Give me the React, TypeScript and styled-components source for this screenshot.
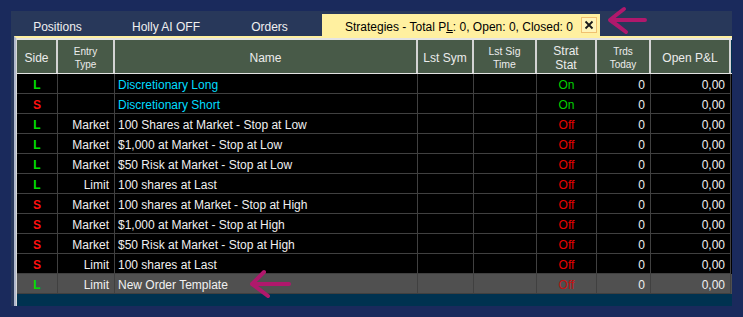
import React from "react";
import styled, { createGlobalStyle } from "styled-components";

const GlobalStyle = createGlobalStyle`
  html, body { margin: 0; padding: 0; background: #1a2a5c; }
  body { font-family: "Liberation Sans", Arial, sans-serif; }
`;

const COLS = "41px 57px 303px 56px 63px 60px 54px 80px";

const Page = styled.div`
  position: relative;
  width: 743px;
  height: 317px;
  box-sizing: border-box;
  padding: 11px 0 0 11px;
`;

const Panel = styled.div`
  width: 721px;
  height: 295px;
  background: #28385a;
  display: flex;
  flex-direction: column;
`;

const TabBar = styled.div`
  height: 25px;
  display: flex;
  align-items: flex-end;
  padding-left: 4px;
`;

const Tab = styled.div<{ $w: number }>`
  width: ${(p) => p.$w}px;
  height: 22px;
  box-sizing: border-box;
  padding-top: 4px;
  display: flex;
  align-items: center;
  justify-content: center;
  color: #f0f0f0;
  font-size: 12px;
`;

const ActiveTab = styled.div`
  margin-left: 15px;
  width: 278px;
  height: 22px;
  box-sizing: border-box;
  padding: 4px 3px 0 23px;
  background: #fff0a0;
  display: flex;
  align-items: center;
  justify-content: space-between;
  color: #000;
  font-size: 12px;
`;

const ActiveLabel = styled.span`
  white-space: nowrap;
  u { text-decoration: underline; }
`;

const CloseBox = styled.div`
  width: 16px;
  height: 16px;
  box-sizing: border-box;
  margin-top: -4px;
  border: 1px solid #f0c070;
  background: #fff4b8;
  display: flex;
  align-items: center;
  justify-content: center;
`;

const Pane = styled.div`
  flex: 1;
  margin-left: 3px;
  border-left: 2px solid #b0b8cc;
  border-top: 2px solid #fff0a0;
  display: flex;
  flex-direction: column;
  background: #003250;
`;

const Grid = styled.div`
  width: 715px;
  flex: 1;
  border-left: 1px solid #d8d8d8;
  display: flex;
  flex-direction: column;
  background: #003250;
`;

const HeaderRow = styled.div`
  display: grid;
  grid-template-columns: ${COLS};
  height: 36px;
  box-sizing: border-box;
  border-top: 2px solid #e4e4e4;
  border-bottom: 1px solid #e4e4e4;
`;

const HeaderCell = styled.div<{ $size?: number; $lh?: number }>`
  background: #485a48;
  border-right: 2px solid #d4d4d4;
  display: flex;
  align-items: center;
  justify-content: center;
  text-align: center;
  padding-top: 2px;
  color: #ececec;
  font-size: ${(p) => p.$size ?? 12}px;
  line-height: ${(p) => p.$lh ?? 14}px;
`;

const DataRow = styled.div<{ $selected?: boolean }>`
  display: grid;
  grid-template-columns: ${COLS};
  height: 20px;
  background: ${(p) => (p.$selected ? "#505050" : "#000000")};
`;

type Align = "left" | "center" | "right";

const Cell = styled.div<{ $align?: Align; $color?: string; $bold?: boolean }>`
  box-sizing: border-box;
  border-right: 1px solid #404040;
  border-bottom: 1px solid #404040;
  padding: 2px ${(p) => (p.$align === "right" ? 5 : 3)}px 0 3px;
  display: flex;
  align-items: center;
  justify-content: ${(p) =>
    p.$align === "right" ? "flex-end" : p.$align === "center" ? "center" : "flex-start"};
  white-space: nowrap;
  overflow: hidden;
  font-size: 12px;
  font-weight: ${(p) => (p.$bold ? 700 : 400)};
  color: ${(p) => p.$color ?? "#f0f0f0"};
`;

const Arrow = styled.svg`
  position: absolute;
  pointer-events: none;
  overflow: visible;
`;

type Row = {
  side: "L" | "S";
  entry: string;
  name: string;
  disc?: boolean;
  on?: boolean;
  selected?: boolean;
};

const rows: Row[] = [
  { side: "L", entry: "", name: "Discretionary Long", disc: true, on: true },
  { side: "S", entry: "", name: "Discretionary Short", disc: true, on: true },
  { side: "L", entry: "Market", name: "100 Shares at Market - Stop at Low" },
  { side: "L", entry: "Market", name: "$1,000 at Market - Stop at Low" },
  { side: "L", entry: "Market", name: "$50 Risk at Market - Stop at Low" },
  { side: "L", entry: "Limit", name: "100 shares at Last" },
  { side: "S", entry: "Market", name: "100 shares at Market - Stop at High" },
  { side: "S", entry: "Market", name: "$1,000 at Market - Stop at High" },
  { side: "S", entry: "Market", name: "$50 Risk at Market - Stop at High" },
  { side: "S", entry: "Limit", name: "100 shares at Last" },
  { side: "L", entry: "Limit", name: "New Order Template", selected: true },
];

export default function App() {
  return (
    <>
      <GlobalStyle />
      <Page>
        <Panel>
          <TabBar>
            <Tab $w={85}>Positions</Tab>
            <Tab $w={132}>Holly AI OFF</Tab>
            <Tab $w={75}>Orders</Tab>
            <ActiveTab>
              <ActiveLabel>
                Strategies - Total P<u>L</u>: 0, Open: 0, Closed: 0
              </ActiveLabel>
              <CloseBox>
                <svg width="10" height="10" viewBox="0 0 10 10">
                  <path d="M1.5 1.5 L8.5 8.5 M8.5 1.5 L1.5 8.5" stroke="#1a1a1a" strokeWidth="1.8" />
                </svg>
              </CloseBox>
            </ActiveTab>
          </TabBar>
          <Pane>
            <Grid>
              <HeaderRow>
                <HeaderCell>Side</HeaderCell>
                <HeaderCell $size={10} $lh={13}>
                  Entry
                  <br />
                  Type
                </HeaderCell>
                <HeaderCell>Name</HeaderCell>
                <HeaderCell>Lst Sym</HeaderCell>
                <HeaderCell $size={10.5} $lh={13}>
                  Lst Sig
                  <br />
                  Time
                </HeaderCell>
                <HeaderCell>
                  Strat
                  <br />
                  Stat
                </HeaderCell>
                <HeaderCell $size={10} $lh={13}>
                  Trds
                  <br />
                  Today
                </HeaderCell>
                <HeaderCell>Open P&amp;L</HeaderCell>
              </HeaderRow>
              {rows.map((r, i) => (
                <DataRow key={i} $selected={r.selected}>
                  <Cell $align="center" $bold $color={r.side === "L" ? "#00e000" : "#ff1010"}>
                    {r.side}
                  </Cell>
                  <Cell $align="right">{r.entry}</Cell>
                  <Cell $color={r.disc ? "#00dcff" : "#f0f0f0"}>{r.name}</Cell>
                  <Cell />
                  <Cell />
                  <Cell
                    $align="center"
                    $color={r.on ? "#00d000" : r.selected ? "#c81010" : "#e80000"}
                  >
                    {r.on ? "On" : "Off"}
                  </Cell>
                  <Cell $align="right">0</Cell>
                  <Cell $align="right">0,00</Cell>
                </DataRow>
              ))}
            </Grid>
          </Pane>
        </Panel>
        <Arrow style={{ left: 604, top: 5 }} width="46" height="32" viewBox="604 5 46 32">
          <path
            d="M645 20 L611 20 M624 9 Q616 15 610 20 Q617 25 626 32"
            stroke="#b0186c"
            strokeWidth="4"
            strokeLinecap="round"
            strokeLinejoin="round"
            fill="none"
          />
        </Arrow>
        <Arrow style={{ left: 248, top: 268 }} width="46" height="32" viewBox="248 268 46 32">
          <path
            d="M289 284 L254 284 M264 272 Q258 278 252 284 Q259 289 268 296"
            stroke="#b0186c"
            strokeWidth="4"
            strokeLinecap="round"
            strokeLinejoin="round"
            fill="none"
          />
        </Arrow>
      </Page>
    </>
  );
}
